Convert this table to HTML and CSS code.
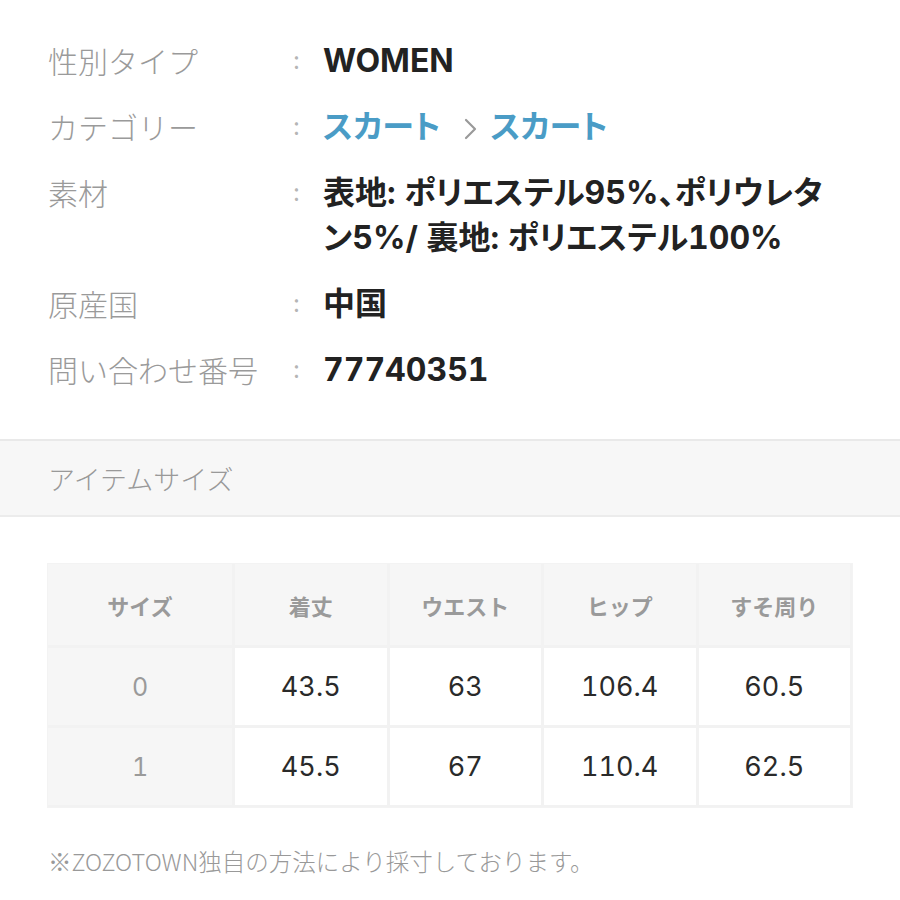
FILE: index.html
```html
<!DOCTYPE html>
<html lang="ja">
<head>
<meta charset="utf-8">
<link rel="stylesheet" href="styles.css">
</head>
<body>
<div class="page">
  <dl class="specs">
    <div class="row"><dt class="label">性別タイプ</dt><dd class="colon">:</dd><dd class="value">WOMEN</dd></div>
    <div class="row"><dt class="label">カテゴリー</dt><dd class="colon">:</dd><dd class="value"><span class="link">スカート</span><svg class="chev" width="14" height="22" viewBox="0 0 14 22"><path d="M2 2 L11 11 L2 20" fill="none" stroke="#9a9a9a" stroke-width="2.2" stroke-linecap="round" stroke-linejoin="round"/></svg><span class="link">スカート</span></dd></div>
    <div class="row"><dt class="label">素材</dt><dd class="colon">:</dd><dd class="value">表地: ポリエステル95%、ポリウレタ<br>ン5%/ 裏地: ポリエステル100%</dd></div>
    <div class="row"><dt class="label">原産国</dt><dd class="colon">:</dd><dd class="value">中国</dd></div>
    <div class="row"><dt class="label">問い合わせ番号</dt><dd class="colon">:</dd><dd class="value">77740351</dd></div>
  </dl>

  <div class="section-head">アイテムサイズ</div>

  <div class="size-table">
    <div class="th">サイズ</div>
    <div class="th">着丈</div>
    <div class="th">ウエスト</div>
    <div class="th">ヒップ</div>
    <div class="th">すそ周り</div>

    <div class="rh">0</div>
    <div class="td">43.5</div>
    <div class="td">63</div>
    <div class="td">106.4</div>
    <div class="td">60.5</div>

    <div class="rh">1</div>
    <div class="td">45.5</div>
    <div class="td">67</div>
    <div class="td">110.4</div>
    <div class="td">62.5</div>
  </div>

  <p class="note">※ZOZOTOWN独自の方法により採寸しております。</p>
</div>
</body>
</html>
```

FILE: styles.css
```css
* { box-sizing: border-box; }
html, body { margin: 0; padding: 0; background: #fff; }
body {
  font-family: "Inter", "Noto Sans CJK JP", sans-serif;
  color: #222;
}
.page { width: 900px; }

.specs {
  margin: 0;
  padding: 38px 0 0 48px;
  display: flex;
  flex-direction: column;
  gap: 21px;
}
.row {
  display: grid;
  grid-template-columns: 244px 31px 1fr;
  align-items: start;
}
.label {
  font-family: "Noto Sans CJK JP", sans-serif;
  font-size: 30px;
  font-weight: 300;
  line-height: 45px;
  color: #9a9a9a;
  white-space: nowrap;
}
.colon {
  margin: 0;
  font-size: 24px;
  line-height: 45px;
  color: #b5b5b5;
  padding-left: 1px;
}
.value {
  margin: 0;
  font-size: 32px;
  font-weight: 700;
  line-height: 45px;
  color: #222;
  font-feature-settings: "palt", "tnum";
  white-space: nowrap;
}
.link { color: #4a9cc6; }
.chev {
  display: inline-block;
  vertical-align: -2px;
  margin: 0 12px 0 24px;
}

.section-head {
  margin-top: 47px;
  height: 78px;
  background: #f7f7f7;
  border-top: 2px solid #e9e9e9;
  border-bottom: 2px solid #ececec;
  padding-left: 48px;
  display: flex;
  align-items: center;
  font-family: "Noto Sans CJK JP", sans-serif;
  font-size: 27px;
  font-weight: 300;
  color: #999;
}

.size-table {
  margin: 46px 0 0 47px;
  width: 806px;
  display: grid;
  grid-template-columns: 184px repeat(4, 1fr);
  grid-template-rows: 81px 77px 77px;
  gap: 3px;
  padding: 0 2px 2px 0;
  background: #f2f2f2;
  border: 1px solid #f3f3f3;
}
.th, .rh, .td {
  display: flex;
  align-items: center;
  justify-content: center;
}
.th {
  background: #f6f6f6;
  font-family: "Noto Sans CJK JP", sans-serif;
  font-size: 22px;
  font-weight: 700;
  color: #9a9a9a;
}
.rh {
  background: #f6f6f6;
  font-size: 25px;
  color: #9a9a9a;
  font-feature-settings: "tnum";
}
.td {
  background: #fff;
  font-size: 27px;
  color: #2a2a2a;
  font-feature-settings: "tnum";
}

.note {
  margin: 38px 0 0 48px;
  font-family: "Noto Sans CJK JP", sans-serif;
  font-size: 23.5px;
  font-weight: 300;
  color: #999;
  line-height: 30px;
}
```
